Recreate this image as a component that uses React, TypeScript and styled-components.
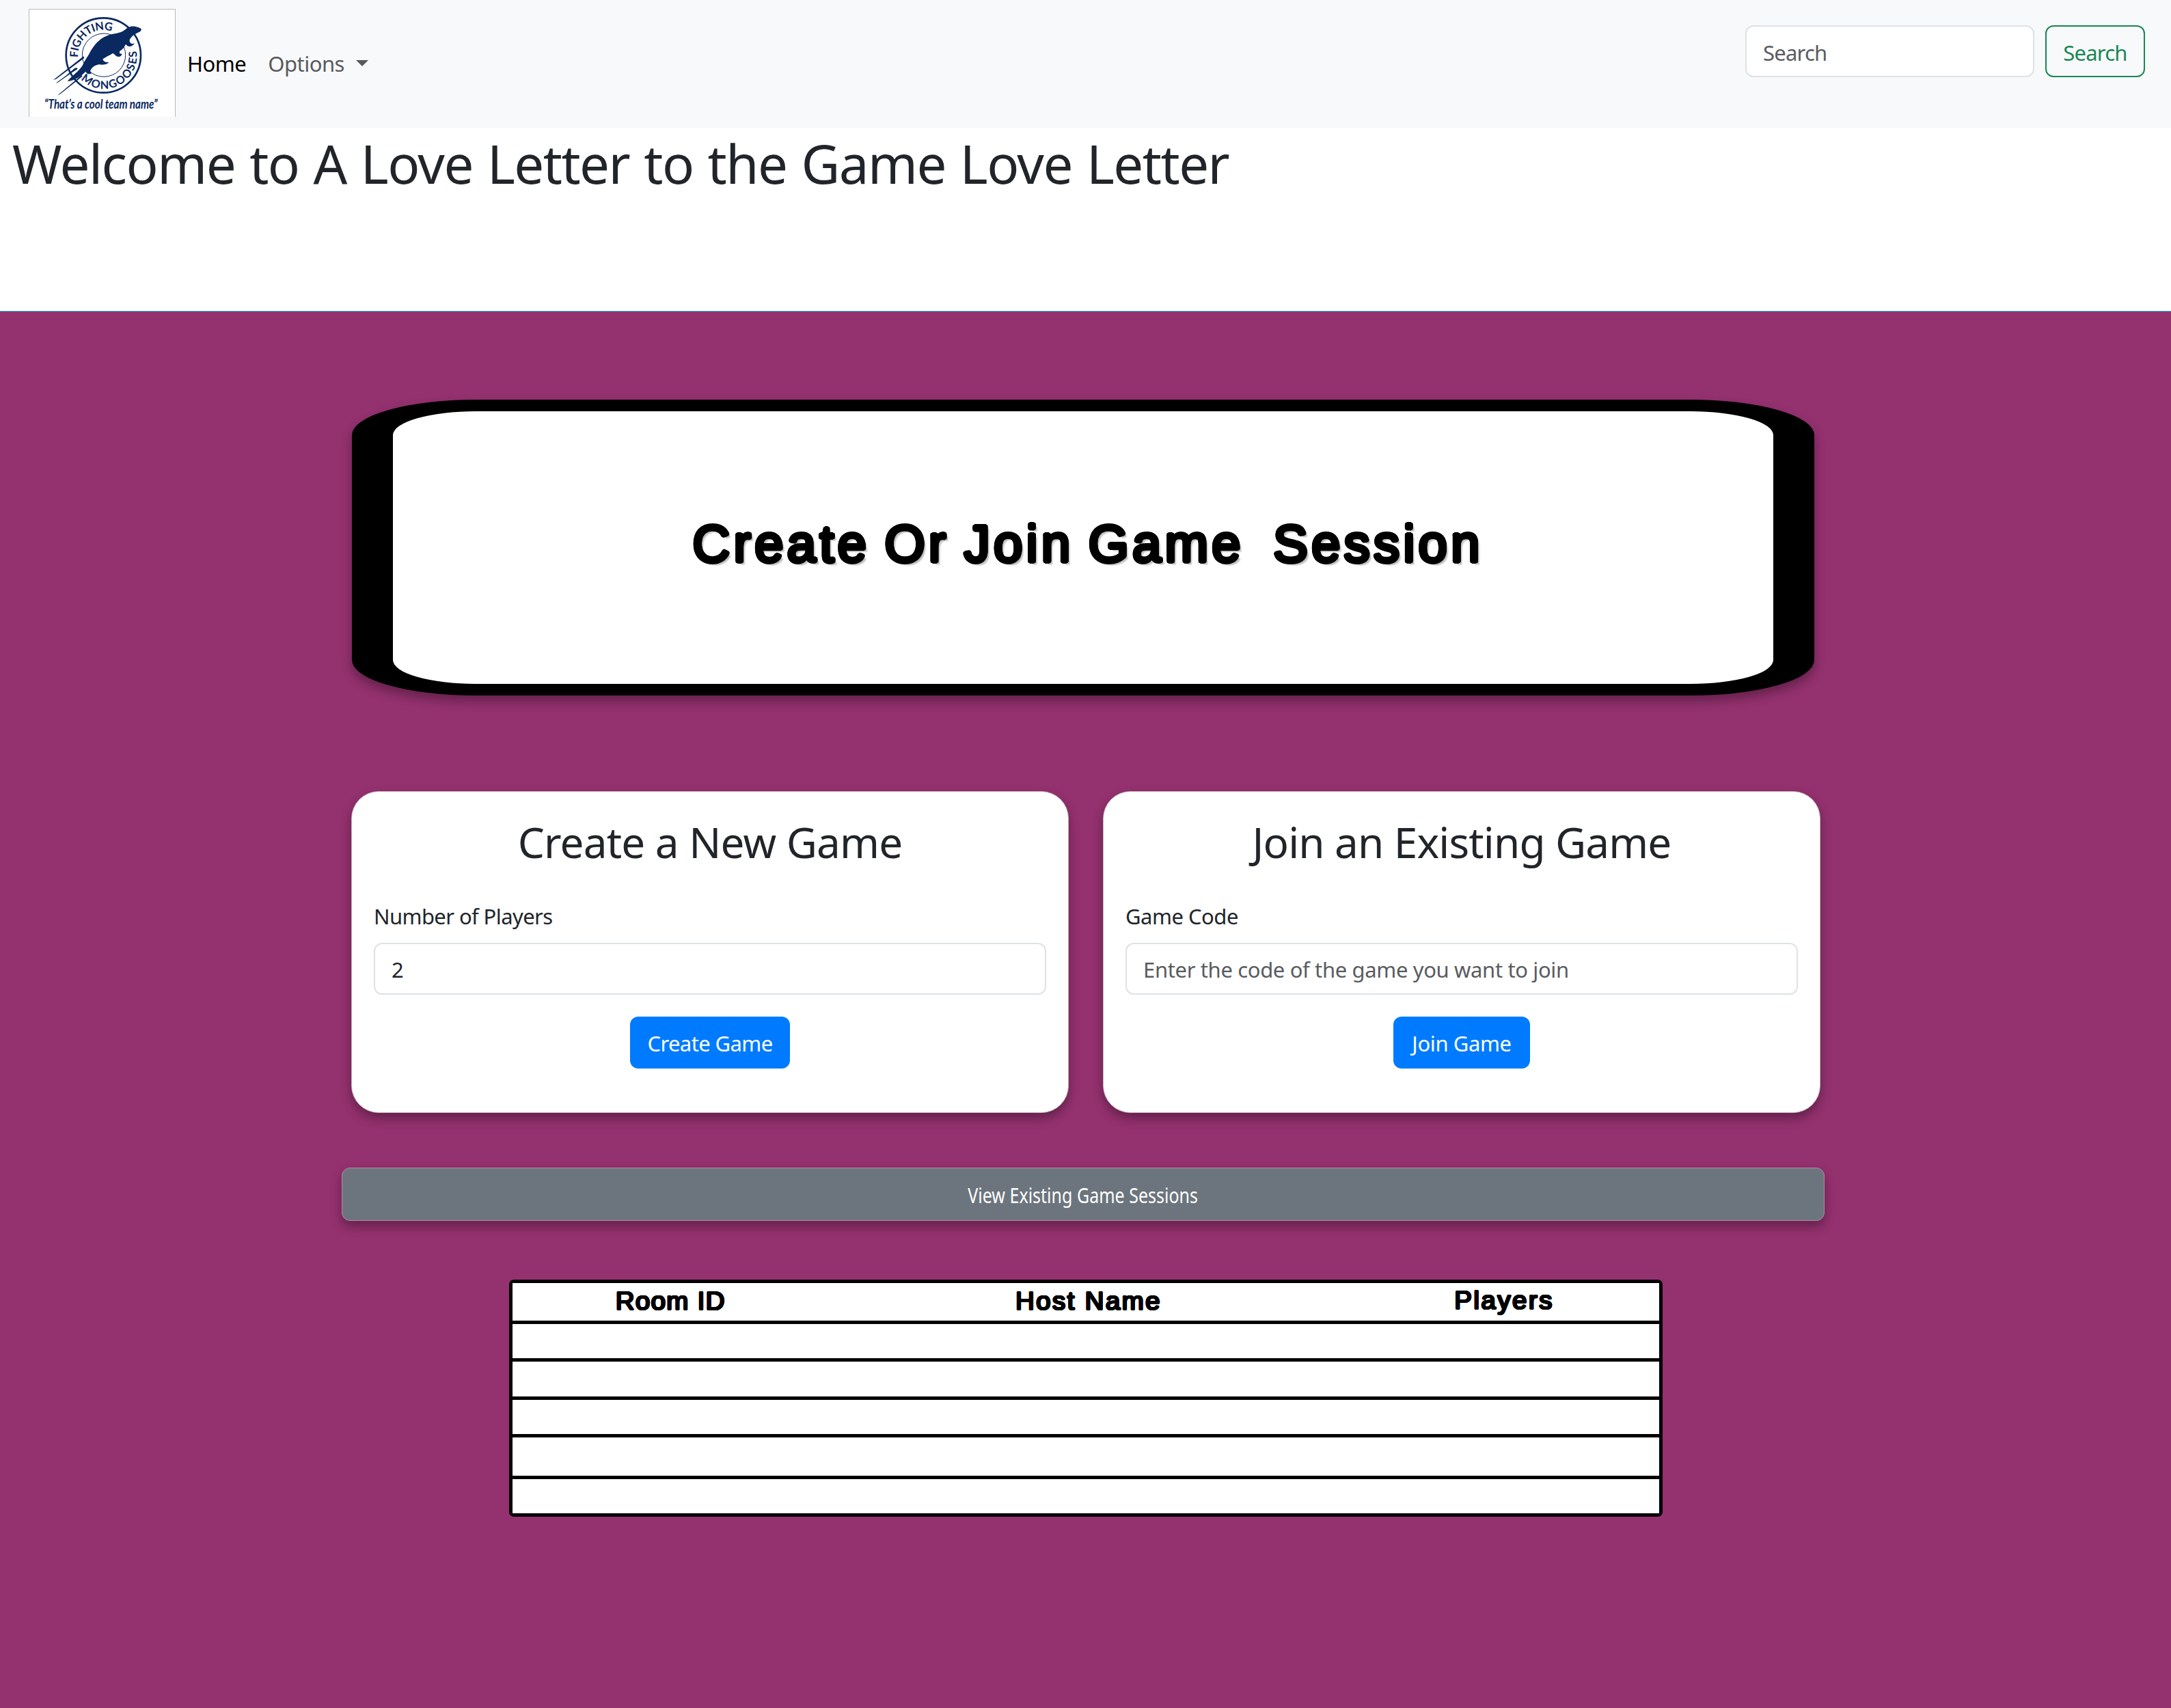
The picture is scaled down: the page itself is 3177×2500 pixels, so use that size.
import React from "react";
import styled, { createGlobalStyle, css } from "styled-components";

const GlobalStyle = createGlobalStyle`
  *, *::before, *::after { box-sizing: border-box; }
  body {
    margin: 0;
    background: #ffffff;
    color: #212529;
    font-family: "Noto Sans", "Open Sans", sans-serif;
    font-size: 31px;
    line-height: 48px;
  }
`;

/** Bold, round-cornered lettering: a regular face thickened evenly on all sides. */
const roundedLetters = (r: number, extra = "") => {
  const steps = 16;
  const rings = Array.from({ length: steps }, (_, i) => {
    const a = (i / steps) * Math.PI * 2;
    return `${(Math.cos(a) * r).toFixed(2)}px ${(Math.sin(a) * r).toFixed(2)}px 0 #000`;
  });
  return css`
    font-family: "Liberation Sans", Arial, sans-serif;
    font-weight: 400;
    color: #000;
    text-shadow: ${rings.join(", ")}${extra};
  `;
};

const Page = styled.div`
  width: 100%;
  min-height: 2500px;
  display: flex;
  flex-direction: column;
`;

const Navbar = styled.nav`
  height: 187px;
  padding: 13px 38px 16px 42px;
  display: flex;
  align-items: flex-start;
  background: #f8f9fa;
`;

const LogoFrame = styled.div`
  width: 215px;
  height: 158px;
  background: #fff;
  border: 1px solid #b9babc;
  border-bottom: 0;
  svg { display: block; margin: -1px 0 0 -1px; overflow: visible; }
`;

const NavLinks = styled.div`
  display: flex;
  align-items: center;
  height: 158px;
  padding: 2px 0 0 17px;
  gap: 32px;
`;

const NavLink = styled.a<{ $active?: boolean; $track: number }>`
  display: flex;
  align-items: center;
  color: ${(p) => (p.$active ? "#000" : "#595a5b")};
  letter-spacing: ${(p) => p.$track}px;
`;

const Caret = styled.span`
  margin: -2px 0 0 17px;
  border: 9px solid transparent;
  border-top-color: #58595a;
  border-bottom: 0;
`;

const SearchForm = styled.form`
  display: flex;
  gap: 16px;
  margin: 24px 0 0 auto;
`;

const Field = styled.input<{ $width?: number; $track?: number; $drop?: number }>`
  width: ${(p) => (p.$width ? `${p.$width}px` : "100%")};
  height: 76px;
  padding: ${(p) => p.$drop ?? 2}px 24px 0;
  border: 2px solid #dee2e6;
  border-radius: 12px;
  background: #fff;
  color: #212529;
  font: inherit;
  letter-spacing: ${(p) => p.$track ?? 0}px;
  outline: none;
  &::placeholder { color: #595c5f; opacity: 1; }
`;

const OutlineButton = styled.button`
  width: 146px;
  height: 76px;
  padding: 3px 0 0;
  border: 2px solid #198754;
  border-radius: 12px;
  background: transparent;
  color: #198754;
  font: inherit;
  letter-spacing: -0.8px;
`;

const Welcome = styled.h1`
  height: 268px;
  margin: 0;
  padding: 4px 0 0 18px;
  font-size: 78px;
  font-weight: 400;
  line-height: 96px;
  letter-spacing: -1.5px;
  word-spacing: 2.2px;
`;

const Lobby = styled.main`
  flex: 1;
  border-top: 1px solid #20b6d0;
  padding: 129px 507px 0 500px;
  background: #94316f;
`;

const Banner = styled.section`
  width: 2140px;
  height: 433px;
  margin-left: 15px;
  display: flex;
  align-items: center;
  justify-content: center;
  background: #fff;
  border: solid #000;
  border-width: 17px 60px;
  border-radius: 181px / 52px;
  box-shadow: 0 8px 16px rgba(0, 0, 0, 0.33);
`;

const BannerTitle = styled.h2`
  margin: 0 0 11px 14px;
  white-space: pre;
  ${roundedLetters(2.6, ", 4px 4px 2px rgba(0,0,0,.22), 5px 5px 2px rgba(0,0,0,.08)")}
  font-size: 76px;
  line-height: 96px;
  letter-spacing: 5.3px;
  word-spacing: -5.2px;
`;

const Cards = styled.div`
  display: grid;
  grid-template-columns: 1050px 1050px;
  gap: 50px;
  margin: 140px 0 0 14px;
`;

const Card = styled.form`
  height: 471px;
  padding: 35px 32px 0;
  display: flex;
  flex-direction: column;
  align-items: center;
  background: #fff;
  border: 1px solid #c4b5bf;
  border-radius: 40px;
  box-shadow: 0 8px 16px rgba(0, 0, 0, 0.33);
`;

const CardTitle = styled.h2<{ $track: number }>`
  margin: 0;
  font-size: 62px;
  font-weight: 400;
  line-height: 77px;
  letter-spacing: ${(p) => p.$track}px;
`;

const Label = styled.label<{ $track: number }>`
  align-self: stretch;
  margin: 46px 0 15px;
  letter-spacing: ${(p) => p.$track}px;
`;

const PrimaryButton = styled.button<{ $width: number; $track: number }>`
  width: ${(p) => p.$width}px;
  height: 76px;
  margin-top: 32px;
  padding: 2px 0 0;
  border: 0;
  border-radius: 12px;
  background: #007bff;
  color: #fff;
  font: inherit;
  letter-spacing: ${(p) => p.$track}px;
`;

const SessionsButton = styled.button`
  display: flex;
  align-items: center;
  justify-content: center;
  width: 2170px;
  height: 78px;
  margin-top: 80px;
  padding: 2px 0 0;
  border: 1px solid #b08aa6;
  border-radius: 12px;
  background: #6c757d;
  color: #fff;
  font: inherit;
  box-shadow: 0 8px 16px rgba(0, 0, 0, 0.33);
`;

const Condensed = styled.span`
  display: block;
  white-space: nowrap;
  transform: scaleX(0.807);
`;

const Table = styled.div`
  width: 1688px;
  margin: 86px 0 0 245px;
  border: 5px solid #000;
  border-radius: 7px;
  background: #000;
  display: grid;
  grid-template-rows: 55px 50px 51px 50px 56px 50px;
  row-gap: 5px;
`;

const Row = styled.div`
  display: grid;
  grid-template-columns: 462px 762px 1fr;
  justify-items: center;
  background: #fff;
`;

const HeadCell = styled.div<{ $track: number; $lift?: number }>`
  ${roundedLetters(1.1)}
  font-size: 36px;
  line-height: ${(p) => 54 - (p.$lift ?? 0) * 2}px;
  letter-spacing: ${(p) => p.$track}px;
  transform: scaleX(1.07);
`;

const NAVY = "#0a2960";

const Logo = () => (
  <LogoFrame>
    <svg width="215" height="158" viewBox="0 0 215 158">
      <defs>
        <path id="ringTop" d="M163 222 A111 111 0 0 1 327 115" />
        <path id="ringBottom" d="M175 318 A144 144 0 0 0 416 179" />
      </defs>
      <g transform="translate(18 -3) scale(0.33333)" fill={NAVY}>
        <circle cx="274" cy="213" r="164" fill="none" stroke={NAVY} strokeWidth="8" />
        <circle cx="276" cy="212" r="95" fill="none" stroke={NAVY} strokeWidth="3" />
        <text fontFamily="Lato, sans-serif" fontWeight="700" fontSize="49">
          <textPath href="#ringTop" textLength="222" lengthAdjust="spacing">FIGHTING</textPath>
        </text>
        <text fontFamily="Lato, sans-serif" fontWeight="700" fontSize="49">
          <textPath href="#ringBottom" textLength="362" lengthAdjust="spacing">MONGOOSES</textPath>
        </text>
        <path
          d="M441 98 C432 90 412 84 396 86 C378 89 372 100 356 109 C336 118 312 118 290 127
             C254 140 226 176 211 208 C200 226 192 236 185 252 C175 276 142 296 116 327
             C146 324 174 308 196 284 C200 296 214 298 223 291 C216 288 215 282 220 273
             C228 262 240 256 254 253 C270 256 288 254 300 243 C286 246 274 240 271 230
             C280 222 300 214 315 204 C324 206 326 218 340 219 C350 219 354 212 356 206
             C346 208 342 202 346 194 C358 188 366 176 372 164 C380 176 398 180 411 160
             C398 166 388 158 389 146 C394 132 408 122 424 114 C434 110 440 106 441 98 Z"
        />
        <path d="M187 217 L54 321 L66 317 L190 225 Z" />
        <path d="M158 266 L64 336 L74 332 L160 272 Z" />
        <path d="M150 268 L112 300 L160 274 Z" />
        <path d="M178 300 L72 389 L84 383 L182 305 Z" />
        <text
          x="15"
          y="447"
          fontFamily="Lato, sans-serif"
          fontStyle="italic"
          fontWeight="700"
          fontSize="54"
          textLength="497"
          lengthAdjust="spacingAndGlyphs"
        >
          “That’s a cool team name”
        </text>
      </g>
    </svg>
  </LogoFrame>
);

const EMPTY_ROWS = [1, 2, 3, 4, 5];

export default function App() {
  return (
    <Page>
      <GlobalStyle />
      <Navbar>
        <Logo />
        <NavLinks>
          <NavLink $active $track={-0.5}>Home</NavLink>
          <NavLink $track={-0.5}>
            Options
            <Caret />
          </NavLink>
        </NavLinks>
        <SearchForm>
          <Field $width={423} $track={-0.8} $drop={3} placeholder="Search" />
          <OutlineButton type="button">Search</OutlineButton>
        </SearchForm>
      </Navbar>
      <Welcome>Welcome to A Love Letter to the Game Love Letter</Welcome>
      <Lobby>
        <Banner>
          <BannerTitle>{"Create Or Join Game  Session"}</BannerTitle>
        </Banner>
        <Cards>
          <Card>
            <CardTitle $track={-0.8}>Create a New Game</CardTitle>
            <Label $track={-0.6}>Number of Players</Label>
            <Field defaultValue="2" />
            <PrimaryButton type="button" $width={234} $track={-0.6}>Create Game</PrimaryButton>
          </Card>
          <Card>
            <CardTitle $track={-0.85}>Join an Existing Game</CardTitle>
            <Label $track={-0.5}>Game Code</Label>
            <Field $track={-0.36} placeholder="Enter the code of the game you want to join" />
            <PrimaryButton type="button" $width={200} $track={-0.4}>Join Game</PrimaryButton>
          </Card>
        </Cards>
        <SessionsButton type="button">
          <Condensed>View Existing Game Sessions</Condensed>
        </SessionsButton>
        <Table>
          <Row>
            <HeadCell $track={1.2}>Room ID</HeadCell>
            <HeadCell $track={2.2}>Host Name</HeadCell>
            <HeadCell $track={2.3} $lift={1}>Players</HeadCell>
          </Row>
          {EMPTY_ROWS.map((n) => (
            <Row key={n} />
          ))}
        </Table>
      </Lobby>
    </Page>
  );
}
